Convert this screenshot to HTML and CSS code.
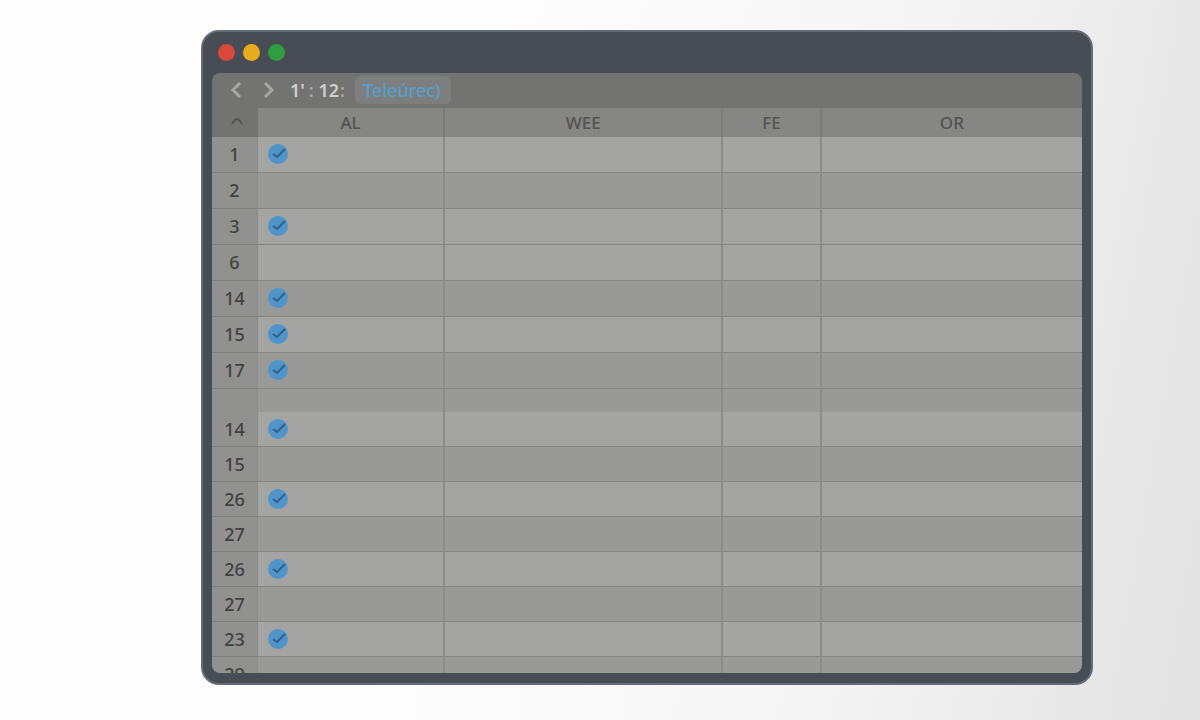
FILE: index.html
```html
<!DOCTYPE html>
<html lang="en">
<head>
  <meta charset="UTF-8" />
  <meta name="viewport" content="width=device-width, initial-scale=1.0"/>
  <title>Teleúrec</title>
  <link rel="stylesheet" href="styles.css">
</head>
<body>

  <main class="window">
    <!-- Title bar -->
    <header class="titlebar">
      <button class="dot red" aria-label="Close"></button>
      <button class="dot yellow" aria-label="Minimize"></button>
      <button class="dot green" aria-label="Maximize"></button>
    </header>

    <div class="screen">
      <!-- Toolbar -->
      <nav class="toolbar">
        <button class="arrow" aria-label="Back">
          <svg width="12" height="16" viewBox="0 0 12 16"><path d="M10 1L3 8l7 7"/></svg>
        </button>
        <button class="arrow" aria-label="Forward">
          <svg width="12" height="16" viewBox="0 0 12 16"><path d="M2 1l7 7-7 7"/></svg>
        </button>
        <span class="position">1<span class="tick">'</span><span class="colon">:</span> 12<span class="colon">:</span></span>
        <button class="tag">Teleúrec)</button>
      </nav>

      <!-- Sheet -->
      <table class="sheet">
        <colgroup>
          <col class="col-num">
          <col class="col-al">
          <col class="col-wee">
          <col class="col-fe">
          <col>
        </colgroup>
        <thead>
          <tr>
            <th class="corner">
              <button class="sort" aria-label="Sort">
                <svg width="14" height="8" viewBox="0 0 14 8"><path d="M2 7q3-5 5-5t5 5"/></svg>
              </button>
            </th>
            <th>AL</th>
            <th>WEE</th>
            <th>FE</th>
            <th>OR</th>
          </tr>
        </thead>
        <tbody class="upper">
          <tr class="light"><th>1</th><td><input type="checkbox" aria-label="Row 1" checked></td><td></td><td></td><td></td></tr>
          <tr><th>2</th><td></td><td></td><td></td><td></td></tr>
          <tr class="light"><th>3</th><td><input type="checkbox" aria-label="Row 3" checked></td><td></td><td></td><td></td></tr>
          <tr class="light"><th>6</th><td></td><td></td><td></td><td></td></tr>
          <tr><th>14</th><td><input type="checkbox" aria-label="Row 14" checked></td><td></td><td></td><td></td></tr>
          <tr class="light"><th>15</th><td><input type="checkbox" aria-label="Row 15" checked></td><td></td><td></td><td></td></tr>
          <tr><th>17</th><td><input type="checkbox" aria-label="Row 17" checked></td><td></td><td></td><td></td></tr>
        </tbody>
        <tbody class="lower">
          <tr class="gap"><th></th><td></td><td></td><td></td><td></td></tr>
          <tr class="light"><th>14</th><td><input type="checkbox" aria-label="Row 14, second group" checked></td><td></td><td></td><td></td></tr>
          <tr><th>15</th><td></td><td></td><td></td><td></td></tr>
          <tr class="light"><th>26</th><td><input type="checkbox" aria-label="Row 26" checked></td><td></td><td></td><td></td></tr>
          <tr><th>27</th><td></td><td></td><td></td><td></td></tr>
          <tr class="light"><th>26</th><td><input type="checkbox" aria-label="Row 26, repeated" checked></td><td></td><td></td><td></td></tr>
          <tr><th>27</th><td></td><td></td><td></td><td></td></tr>
          <tr class="light"><th>23</th><td><input type="checkbox" aria-label="Row 23" checked></td><td></td><td></td><td></td></tr>
          <tr><th>29</th><td></td><td></td><td></td><td></td></tr>
        </tbody>
      </table>
    </div>
  </main>

</body>
</html>
```
FILE: styles.css
```css
* {
  box-sizing: border-box;
}

body {
  margin: 0;
  height: 100vh;
  display: flex;
  padding: 30px 107px 35px 201px;
  background: linear-gradient(100deg, #fefefe 35%, #f5f5f5 70%, #e9e9e9 88%, #e3e3e3);
  font-family: "Noto Sans", sans-serif;
}

button {
  border: 0;
  padding: 0;
  background: none;
  font: inherit;
  color: inherit;
}

svg {
  display: block;
  fill: none;
  stroke: currentColor;
}

.window {
  flex: 1;
  display: flex;
  flex-direction: column;
  padding: 0 9px 10px;
  background: #484c55;
  border: 2px solid #666b79;
  border-radius: 18px;
}

.titlebar {
  display: flex;
  align-items: center;
  gap: 8px;
  height: 41px;
  flex-shrink: 0;
  padding-left: 6px;
}

.dot {
  width: 17px;
  height: 17px;
  border-radius: 50%;
}

.red { background: #d9483b; }
.yellow { background: #e5ac1c; }
.green { background: #2f9e41; }

.screen {
  flex: 1;
  min-height: 0;
  overflow: hidden;
  background: #737371;
  border-radius: 8px;
}

.toolbar {
  display: flex;
  align-items: center;
  height: 35px;
  padding: 0 0 2px 18px;
  color: #a6a6a6;
}

.arrow {
  margin-right: 21px;
}

.arrow svg {
  stroke-width: 3;
}

.position {
  margin-left: -6px;
  font-size: 18px;
  font-weight: 600;
  color: #cfcfcf;
}

.tick {
  margin-right: 3px;
}

.colon {
  margin-left: 1px;
  color: #a9a9a9;
}

.tag {
  height: 28px;
  margin-left: 10px;
  padding: 0 10px 0 8px;
  font-size: 18px;
  font-weight: 500;
  line-height: 28px;
  color: #559fcf;
  background: #7d7e7e;
  border-radius: 6px;
}

.sheet {
  width: 100%;
  table-layout: fixed;
  border-collapse: separate;
  border-spacing: 0;
}

.col-num { width: 46px; }
.col-al { width: 21.5%; }
.col-wee { width: 32%; }
.col-fe { width: 11.3%; }

.sheet th,
.sheet td {
  height: 36px;
  padding: 0;
  line-height: 24px;
}

.sheet td {
  background: #999998;
  border-right: 2px solid #8b8b8a;
  border-bottom: 1px solid #868685;
}

.sheet .light td {
  background: #a4a4a2;
}

.sheet thead th {
  height: 29px;
  background: #868685;
  border-right: 2px solid #7b7b7a;
  font-size: 17px;
  font-weight: 500;
  color: #535353;
}

.sheet th:last-child,
.sheet td:last-child {
  border-right: 0;
}

.sheet thead .corner {
  background: #737371;
  border-right: 0;
  color: #555;
}

.sort {
  display: block;
  margin: 0 auto;
  padding: 0 0 3px 4px;
}

.sort svg {
  stroke-width: 2;
}

.sheet tbody th {
  background: #919190;
  border-right: 1px solid #8b8b8a;
  border-bottom: 1px solid #7e7e7d;
  font-size: 18px;
  font-weight: 500;
  color: #424242;
}

.sheet .upper th,
.sheet .upper td {
  padding-bottom: 2px;
}

.sheet .lower th,
.sheet .lower td {
  height: 35px;
}

.sheet .gap th,
.sheet .gap td {
  height: 23px;
  border-bottom: 0;
}

input[type="checkbox"] {
  appearance: none;
  display: block;
  width: 20px;
  height: 20px;
  margin: 0 0 0 10px;
  border-radius: 50%;
}

input[type="checkbox"]:checked {
  background: #4f94ca url("data:image/svg+xml,%3Csvg xmlns='http://www.w3.org/2000/svg' viewBox='0 0 20 20'%3E%3Cpath d='M5 10l4 3 8-8' fill='none' stroke='%23315f87' stroke-width='2'/%3E%3C/svg%3E");
}
```
